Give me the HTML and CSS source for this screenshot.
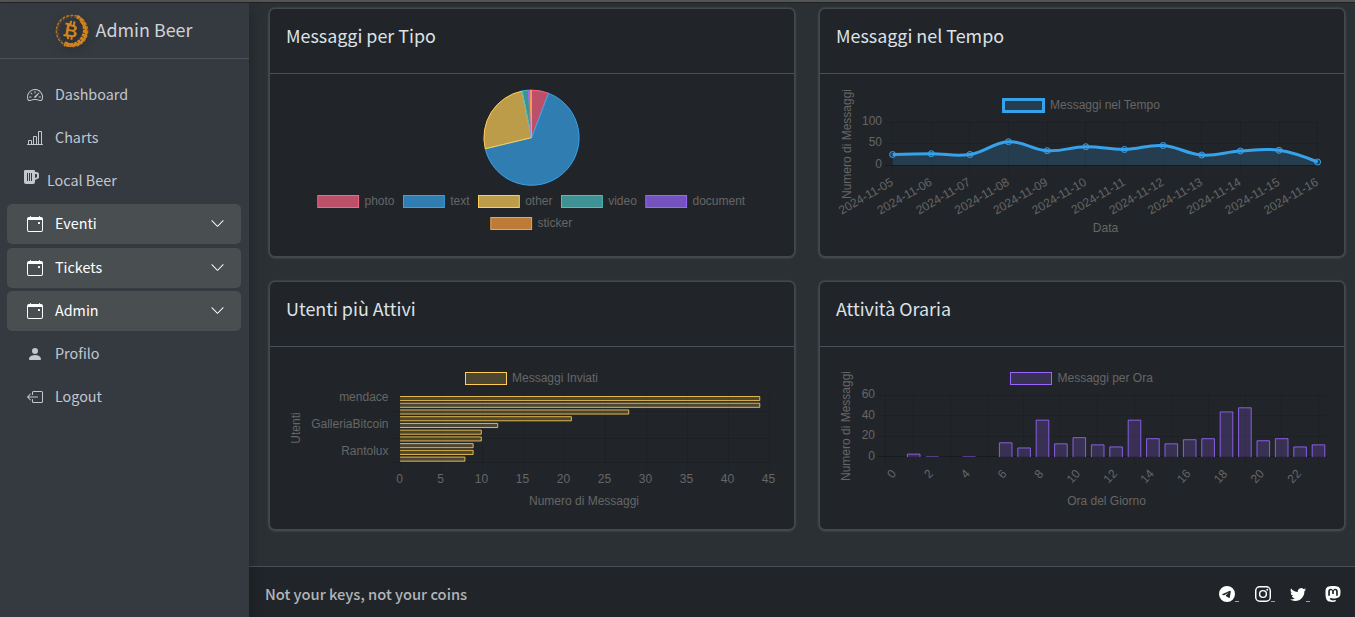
FILE: index.html
```html
<!DOCTYPE html>
<html lang="it">
<head>
<meta charset="utf-8">
<title>Admin Beer</title>
<link rel="stylesheet" href="styles.css">
</head>
<body>
<svg class="defs" width="0" height="0">
  <symbol id="calendar" viewBox="0 0 16 16"><path d="M11 6.5a.5.5 0 0 1 .5-.5h1a.5.5 0 0 1 .5.5v1a.5.5 0 0 1-.5.5h-1a.5.5 0 0 1-.5-.5z"/><path d="M3.5 0a.5.5 0 0 1 .5.5V1h8V.5a.5.5 0 0 1 1 0V1h1a2 2 0 0 1 2 2v11a2 2 0 0 1-2 2H2a2 2 0 0 1-2-2V3a2 2 0 0 1 2-2h1V.5a.5.5 0 0 1 .5-.5M1 4v10a1 1 0 0 0 1 1h12a1 1 0 0 0 1-1V4z"/></symbol>
  <symbol id="chevron" viewBox="0 0 16 16"><path d="M1.646 4.646a.5.5 0 0 1 .708 0L8 10.293l5.646-5.647a.5.5 0 0 1 .708.708l-6 6a.5.5 0 0 1-.708 0l-6-6a.5.5 0 0 1 0-.708"/></symbol>
</svg>
<div class="app">
  <aside class="sidebar">
    <div class="brand">
      <svg class="logo" width="34" height="34" viewBox="0 0 34 34">
        <circle cx="17" cy="17" r="15.6" fill="none" stroke="#b77620" stroke-width="1.5" stroke-dasharray="3 1.2"/>
        <circle cx="17" cy="17" r="14" fill="none" stroke="#8c622d" stroke-width="1" stroke-dasharray="1.5 2.5"/>
        <path d="M22 2.4A15.4 15.4 0 0 1 9 30.2" fill="none" stroke="#d28420" stroke-width="3.6" stroke-dasharray="3.2 .8"/>
        <path d="M26 7.5A13 13 0 0 1 10 28.3" fill="none" stroke="#cf8220" stroke-width="2.4"/>
        <g transform="rotate(10 16 16)">
          <path d="M14.5 7v4M18 7v4M14.5 21.500v4M18 21.500v4M9.500 10.600h4M9.500 22.200h4" stroke="#d28420" stroke-width="2"/>
          <text x="16.5" y="23" text-anchor="middle">B</text>
        </g>
      </svg>
      <span class="brand-text">Admin Beer</span>
    </div>
    <nav class="menu">
      <a class="link"><svg class="icon" viewBox="0 0 16 16"><path d="M8 4a.5.5 0 0 1 .5.5V6a.5.5 0 0 1-1 0V4.5A.5.5 0 0 1 8 4M3.732 5.732a.5.5 0 0 1 .707 0l.915.914a.5.5 0 1 1-.708.708l-.914-.915a.5.5 0 0 1 0-.707M2 10a.5.5 0 0 1 .5-.5h1.586a.5.5 0 0 1 0 1H2.5A.5.5 0 0 1 2 10m9.5 0a.5.5 0 0 1 .5-.5h1.5a.5.5 0 0 1 0 1H12a.5.5 0 0 1-.5-.5m.754-4.246a.389.389 0 0 0-.527-.02L7.547 9.31a.91.91 0 1 0 1.302 1.258l3.434-4.297a.389.389 0 0 0-.029-.518z"/><path fill-rule="evenodd" d="M0 10a8 8 0 1 1 15.547 2.661c-.442 1.253-1.845 1.602-2.932 1.25C11.309 13.488 9.475 13 8 13c-1.474 0-3.31.488-4.615.911-1.087.352-2.49.003-2.932-1.25A8 8 0 0 1 0 10m8-7a7 7 0 0 0-6.603 9.329c.203.575.923.876 1.68.63C4.397 12.533 6.358 12 8 12s3.604.532 4.923.96c.757.245 1.477-.056 1.68-.631A7 7 0 0 0 8 3"/></svg><span>Dashboard</span></a>
      <a class="link"><svg class="icon" viewBox="0 0 16 16"><path d="M11 2a1 1 0 0 1 1-1h2a1 1 0 0 1 1 1v12h.5a.5.5 0 0 1 0 1H.5a.5.5 0 0 1 0-1H1v-3a1 1 0 0 1 1-1h2a1 1 0 0 1 1 1v3h1V7a1 1 0 0 1 1-1h2a1 1 0 0 1 1 1v7h1zm1 12h2V2h-2zm-3 0V7H7v7zm-5 0v-3H2v3z"/></svg><span>Charts</span></a>
      <a class="link link-beer"><svg class="beer" viewBox="0 0 15 14"><path fill-rule="evenodd" d="M1.3 0h8.4Q11 0 11 1.3V2h1.5A2.5 2.5 0 0 1 15 4.5v2.3a2 2 0 0 1-1.3 1.9L11 10v2a2 2 0 0 1-2 2H2a2 2 0 0 1-2-2V1.3Q0 0 1.3 0M11 4v4l1.6-.8a.8.8 0 0 0 .4-.7V4.700a.7.7 0 0 0-.7-.7zM3 3v8h1V3zm2 0v8h1V3zm2 0v8h1V3z"/></svg><span>Local Beer</span></a>
      <a class="link open"><svg class="icon"><use href="#calendar"/></svg><span>Eventi</span><svg class="arrow"><use href="#chevron"/></svg></a>
      <a class="link open"><svg class="icon"><use href="#calendar"/></svg><span>Tickets</span><svg class="arrow"><use href="#chevron"/></svg></a>
      <a class="link open"><svg class="icon"><use href="#calendar"/></svg><span>Admin</span><svg class="arrow"><use href="#chevron"/></svg></a>
      <a class="link"><svg class="icon" viewBox="0 0 16 16"><path d="M3 14s-1 0-1-1 1-4 6-4 6 3 6 4-1 1-1 1zm5-6a3 3 0 1 0 0-6 3 3 0 0 0 0 6"/></svg><span>Profilo</span></a>
      <a class="link"><svg class="icon" viewBox="0 0 16 16"><path d="M6 12.5a.5.5 0 0 0 .5.5h8a.5.5 0 0 0 .5-.5v-9a.5.5 0 0 0-.5-.5h-8a.5.5 0 0 0-.5.5v2a.5.5 0 0 1-1 0v-2A1.5 1.5 0 0 1 6.5 2h8A1.5 1.5 0 0 1 16 3.5v9a1.5 1.5 0 0 1-1.5 1.5h-8A1.5 1.5 0 0 1 5 12.5v-2a.5.5 0 0 1 1 0z"/><path d="M.146 8.354a.5.5 0 0 1 0-.708l3-3a.5.5 0 1 1 .708.708L1.707 7.5H10.500a.5.5 0 0 1 0 1H1.707l2.147 2.146a.5.5 0 0 1-.708.708z"/></svg><span>Logout</span></a>
    </nav>
  </aside>
  <div class="page">
    <main class="grid">
      <section class="card"><h3>Messaggi per Tipo</h3><svg class="chart" id="types" viewBox="270 74 525 182"></svg></section>
      <section class="card"><h3>Messaggi nel Tempo</h3><svg class="chart" id="timeline" viewBox="820 74 525 182"></svg></section>
      <section class="card"><h3>Utenti più Attivi</h3><svg class="chart" id="users" viewBox="270 347 525 182"></svg></section>
      <section class="card"><h3>Attività Oraria</h3><svg class="chart" id="hours" viewBox="820 347 525 182"></svg></section>
    </main>
    <footer class="footer">
      <span class="motto">Not your keys, not your coins</span>
      <div class="social">
        <a><svg viewBox="0 0 16 16"><path d="M16 8A8 8 0 1 1 0 8a8 8 0 0 1 16 0M8.287 5.906q-1.168.486-4.666 2.010-.567.225-.595.442c-.03.243.275.339.69.47l.175.055c.408.133.958.288 1.243.294q.39.01.868-.32 3.269-2.206 3.374-2.230c.05-.012.12-.026.166.016s.042.12.037.141c-.03.129-1.227 1.241-1.846 1.817-.193.18-.33.307-.358.336a8 8 0 0 1-.188.186c-.38.366-.664.64.015 1.088.327.216.589.393.85.571.284.194.568.387.936.629q.14.092.27.187c.331.236.63.448.997.414.214-.02.435-.22.547-.82.265-1.417.786-4.486.906-5.751a1.400 1.400 0 0 0-.013-.315.34.34 0 0 0-.114-.217.53.53 0 0 0-.31-.093c-.3.005-.763.166-2.984 1.090"/></svg></a>
        <a><svg viewBox="0 0 16 16"><path fill-rule="evenodd" d="M4.700 0h6.600A4.700 4.700 0 0 1 16 4.700v6.600a4.700 4.700 0 0 1-4.700 4.700H4.700A4.700 4.700 0 0 1 0 11.300V4.700A4.700 4.700 0 0 1 4.700 0m0 1.450A3.250 3.250 0 0 0 1.450 4.700v6.600a3.250 3.250 0 0 0 3.250 3.250h6.600a3.250 3.250 0 0 0 3.250-3.250V4.700a3.250 3.250 0 0 0-3.250-3.250zM12.300 2.800a.95.95 0 1 1 0 1.900.95.95 0 0 1 0-1.900M8 3.900a4.100 4.100 0 1 1 0 8.200 4.100 4.100 0 0 1 0-8.200m0 1.450a2.650 2.650 0 1 0 0 5.300 2.650 2.650 0 0 0 0-5.300"/></svg></a>
        <a><svg viewBox="0 0 16 16"><path d="M5.026 15c6.038 0 9.341-5.003 9.341-9.334q.002-.211-.006-.422A6.700 6.700 0 0 0 16 3.542a6.700 6.700 0 0 1-1.889.518 3.300 3.300 0 0 0 1.447-1.817 6.500 6.500 0 0 1-2.087.793A3.286 3.286 0 0 0 7.875 6.030a9.320 9.320 0 0 1-6.767-3.429 3.290 3.290 0 0 0 1.018 4.382A3.300 3.300 0 0 1 .64 6.575v.045a3.290 3.290 0 0 0 2.632 3.218 3.200 3.200 0 0 1-.865.115 3 3 0 0 1-.614-.057 3.280 3.280 0 0 0 3.067 2.277A6.600 6.600 0 0 1 .78 13.580a6 6 0 0 1-.78-.045A9.340 9.340 0 0 0 5.026 15"/></svg></a>
        <a><svg viewBox="0 0 16 16"><path d="M11.190 12.195c2.016-.24 3.770-1.475 3.990-2.603.348-1.778.32-4.339.32-4.339 0-3.470-2.286-4.488-2.286-4.488C12.062.238 10.083.017 8.027 0h-.05C5.920.017 3.942.238 2.790.765c0 0-2.285 1.017-2.285 4.488l-.002.662c-.004.64-.007 1.350.011 2.091.083 3.394.626 6.740 3.780 7.570 1.454.383 2.703.463 3.709.408 1.823-.1 2.847-.647 2.847-.647l-.06-1.317s-1.303.41-2.767.36c-1.450-.05-2.980-.156-3.215-1.928a4 4 0 0 1-.033-.496s1.424.346 3.228.428c1.103.05 2.137-.064 3.188-.189zm1.613-2.470H11.130v-4.080c0-.859-.364-1.295-1.091-1.295-.804 0-1.207.517-1.207 1.541v2.233H7.168V5.890c0-1.024-.403-1.541-1.207-1.541-.727 0-1.091.436-1.091 1.296v4.079H3.197V5.522q0-1.288.66-2.046c.456-.505 1.052-.764 1.793-.764.856 0 1.504.328 1.933.983L8 4.390l.417-.695c.429-.655 1.077-.983 1.934-.983.74 0 1.336.259 1.791.764q.662.757.661 2.046z"/></svg></a>
      </div>
    </footer>
  </div>
</div>
<script src="charts.js"></script>
</body>
</html>
```

FILE: styles.css
```css
* { box-sizing: border-box; }
body {
  margin: 0;
  height: 617px;
  overflow: hidden;
  background: #2b3035;
  color: #dee2e6;
  font: 16px/24px "Noto Sans CJK SC", "Noto Sans", sans-serif;
}
.defs { position: absolute; }
.app {
  display: flex;
  height: 617px;
  border-top: 2px solid #545454;
}
.sidebar {
  flex: 0 0 249px;
  background: #353a41;
  border-top: 1px solid #202326;
  box-shadow: 0 8px 14px rgba(0, 0, 0, .3);
  z-index: 1;
}
.brand {
  display: flex;
  align-items: center;
  justify-content: center;
  gap: 7px;
  height: 56px;
  padding-right: 2px;
  border-bottom: 1px solid #4b545c;
}
.logo {
  filter: drop-shadow(0 3px 5px rgba(0, 0, 0, .25));
}
.logo text {
  font: bold 18px "Liberation Sans", sans-serif;
  fill: #d28420;
}
.brand-text {
  margin-bottom: 3px;
  font-size: 17.9px;
  color: #d0d3d6;
}
.menu {
  display: flex;
  flex-direction: column;
  gap: 3.2px;
  padding: 15.8px 8px 0 7px;
}
.link {
  display: flex;
  align-items: center;
  height: 40px;
  padding: 0 16.5px 0 20px;
  border-radius: 5px;
  color: #c2c7d0;
  font-size: 14.35px;
}
.link span { margin-bottom: 1.8px; }
.icon { width: 16px; height: 16px; margin-right: 12px; fill: currentColor; }
.beer { width: 15px; height: 14px; margin: 0 8px 8px -3px; fill: currentColor; }
.open { background: #494e51; color: #fff; }
.arrow { width: 15px; height: 15px; margin-left: auto; margin-bottom: 1px; fill: currentColor; }
.page {
  flex: 1;
  display: flex;
  flex-direction: column;
  border-top: 1px solid #202326;
}
.grid {
  flex: 1;
  display: grid;
  grid-template-columns: 526px 526px;
  grid-auto-rows: 249px;
  gap: 24px;
  padding: 5px 0 0 20px;
}
.card {
  border: 1px solid #43484c;
  border-radius: 6px;
  background: #212529;
  box-shadow: 0 0 2px #5c6063, 0 1px 3px rgba(110, 114, 118, .4);
}
.card h3 {
  height: 65px;
  margin: 0;
  padding: 14px 16px;
  border-bottom: 1px solid #495057;
  font-size: 17.9px;
  font-weight: 400;
}
.chart { display: block; width: 525px; height: 182px; }
.chart text { font: 12px "Liberation Sans", Arial, sans-serif; fill: #666; }
.footer {
  display: flex;
  align-items: center;
  justify-content: space-between;
  height: 51px;
  padding: 4px 14px 0 16px;
  border-top: 1px solid #495057;
  background: #212529;
  color: #b1b5b8;
}
.motto { font-weight: 500; font-size: 14.7px; }
.social { display: flex; gap: 19.2px; }
.social a { position: relative; height: 16px; }
.social svg { display: block; width: 16px; height: 16px; fill: #fff; }
.social a:not(:last-child)::after {
  content: "";
  position: absolute;
  left: 16px;
  top: 15px;
  width: 4px;
  height: 1px;
  background: #6ea8fe;
}
```

FILE: charts.js
```js
const tag = (name, attrs, body = "") =>
  `<${name} ${Object.entries(attrs).map(([k, v]) => `${k}="${v}"`).join(" ")}>${body}</${name}>`;

const label = (x, y, text, anchor = "middle", angle = 0) =>
  tag("text", { x, y: y + 4, "text-anchor": anchor, transform: `rotate(${angle} ${x} ${y})` }, text);

const line = (x1, y1, x2, y2, opacity = 0.12) =>
  tag("path", { d: `M${x1} ${y1}L${x2} ${y2}`, stroke: `rgba(0,0,0,${opacity})`, fill: "none" });

const box = (x, y, w, h, rgb, alpha, sw = 1) =>
  tag("rect", { x, y, width: w, height: h, fill: `rgba(${rgb},${alpha})`, stroke: `rgb(${rgb})`, "stroke-width": sw });

const render = (id, parts) => { document.getElementById(id).innerHTML = parts.join(""); };

const RED = "255,99,132", BLUE = "54,162,235", YELLOW = "255,206,86";
const TEAL = "75,192,192", PURPLE = "153,102,255", ORANGE = "255,159,64";

// Message types
{
  const cx = 531.5, cy = 137.7, r = 47.6;
  const slices = [[0, 20.9, RED], [20.9, 256.5, BLUE], [256.5, 348.5, YELLOW],
    [348.5, 356.2, TEAL], [356.2, 358.3, PURPLE], [358.3, 360, ORANGE]];
  const point = a => {
    const t = (a - 90) * Math.PI / 180;
    return `${cx + r * Math.cos(t)} ${cy + r * Math.sin(t)}`;
  };
  const out = slices.map(([a, b, c]) => tag("path", {
    d: `M${cx} ${cy}L${point(a)}A${r} ${r} 0 ${b - a > 180 ? 1 : 0} 1 ${point(b)}Z`,
    fill: `rgba(${c},.7)`, stroke: `rgb(${c})`, "stroke-linejoin": "bevel"
  }));
  [[317.8, 201.5, "photo", RED], [403.5, 201.5, "text", BLUE], [478.5, 201.5, "other", YELLOW],
    [561.5, 201.5, "video", TEAL], [645.8, 201.5, "document", PURPLE], [490.8, 223.5, "sticker", ORANGE]]
    .forEach(([x, y, t, c]) => out.push(box(x, y - 6, 40.8, 12, c, 0.7), label(x + 46.7, y - 0.6, t, "start")));
  render("types", out);
}

// Messages over time
{
  const ys = [154.5, 153.7, 154.5, 141.7, 150.7, 146.7, 149.5, 145.5, 155, 151, 150.3, 162];
  const pts = ys.map((y, i) => [892.6 + 38.64 * i, y]);
  const slope = i => i && i < 11 ? 0.2 * (ys[i + 1] - ys[i - 1]) : 0;
  const dx = i => i && i < 11 ? 15.45 : 0;
  let d = `M${pts[0]}`;
  for (let i = 1; i < 12; i++) {
    const [px, py] = pts[i - 1], [x, y] = pts[i];
    d += `C${px + dx(i - 1)} ${py + slope(i - 1)} ${x - dx(i)} ${y - slope(i)} ${x} ${y}`;
  }
  const out = [line(885, 122.5, 1318, 122.5), line(885, 143.5, 1318, 143.5), line(885, 165.5, 1318, 165.5, 0.25)];
  pts.forEach(([x], i) => out.push(line(Math.floor(x) + .5, 122, Math.floor(x) + .5, 172.5),
    label(x - 0.5, 181, `2024-11-${String(i + 5).padStart(2, "0")}`, "end", -30)));
  out.push(tag("path", { d: `${d}V165H892.6Z`, fill: `rgba(${BLUE},.2)` }),
    tag("path", { d, fill: "none", stroke: `rgb(${BLUE})`, "stroke-width": 3 }));
  pts.forEach(([x, y]) => out.push(tag("circle", { cx: x, cy: y, r: 3, fill: `rgba(${BLUE},.2)`, stroke: `rgb(${BLUE})` })));
  out.push(box(1003.5, 99.5, 40, 12, BLUE, 0.2, 3), label(1050, 105, "Messaggi nel Tempo", "start"),
    label(882, 121, "100", "end"), label(882, 142, "50", "end"), label(882, 164, "0", "end"),
    label(847, 144, "Numero di Messaggi", "middle", -90), label(1105.5, 228, "Data"));
  render("timeline", out);
}

// Most active users
{
  const out = [];
  for (let i = 0; i < 10; i++) {
    const x = 400.5 + 41 * i;
    out.push(line(x, 395, x, 469), label(x - 1, 479, i * 5));
  }
  [411.5, 438.5, 462.5].forEach(y => out.push(line(392, y, 769, y)));
  [44, 44, 28, 21, 12, 10, 10, 9, 9, 8].forEach((v, i) => {
    const y = 396.5 + 6.73 * i, end = 399.4 + v * 8.19;
    out.push(tag("path", { d: `M400 ${y}H${end}v4.1H400`, fill: `rgba(${YELLOW},.2)`, stroke: `rgb(${YELLOW})`, "stroke-opacity": .85 }));
  });
  out.push(box(465.5, 372.5, 41, 12, YELLOW, 0.2), label(512, 378, "Messaggi Inviati", "start"),
    label(388.5, 397, "mendace", "end"), label(388.5, 424, "GalleriaBitcoin", "end"), label(388.5, 451, "Rantolux", "end"),
    label(296, 428, "Utenti", "middle", -90), label(584, 501, "Numero di Messaggi"));
  render("users", out);
}

// Hourly activity
{
  const out = [395.5, 415.5, 436.5, 456.5].map((y, i) => line(878, y, 1327, y, i === 3 ? 0.25 : 0.12));
  [885.5, 913.5, 950.5, 987.5, 1023.5, 1060.5, 1097.5, 1134.5, 1171.5, 1208.5, 1245.5, 1281.5, 1318.5]
    .forEach(x => out.push(line(x, 395, x, 464)));
  [0, 2, .3, 0, .3, 0, 13, 8, 35, 12, 18, 11, 9, 35, 17, 12, 16, 17, 43, 47, 15, 17, 9, 11].forEach((v, i) => {
    const x = 889 + 18.4 * i, top = 456.2 - v * 1.03;
    if (v >= 1) out.push(tag("path", { d: `M${x} 457V${top}h12.6V457`, fill: `rgba(${PURPLE},.2)`, stroke: `rgb(${PURPLE})`, "stroke-opacity": .85 }));
    else if (v) out.push(tag("path", { d: `M${x} 456.5h13`, stroke: `rgb(${PURPLE})`, "stroke-opacity": .45 }));
    if (i % 2 === 0) out.push(label(x + 5, 471.5, i, "end", -47));
  });
  out.push(box(1010.5, 372.5, 41, 12, PURPLE, 0.2), label(1057.5, 378, "Messaggi per Ora", "start"));
  ["60", "40", "20", "0"].forEach((t, i) => out.push(label(875, 394 + 20.7 * i, t, "end")));
  out.push(label(846, 426, "Numero di Messaggi", "middle", -90), label(1106.5, 501, "Ora del Giorno"));
  render("hours", out);
}
```
